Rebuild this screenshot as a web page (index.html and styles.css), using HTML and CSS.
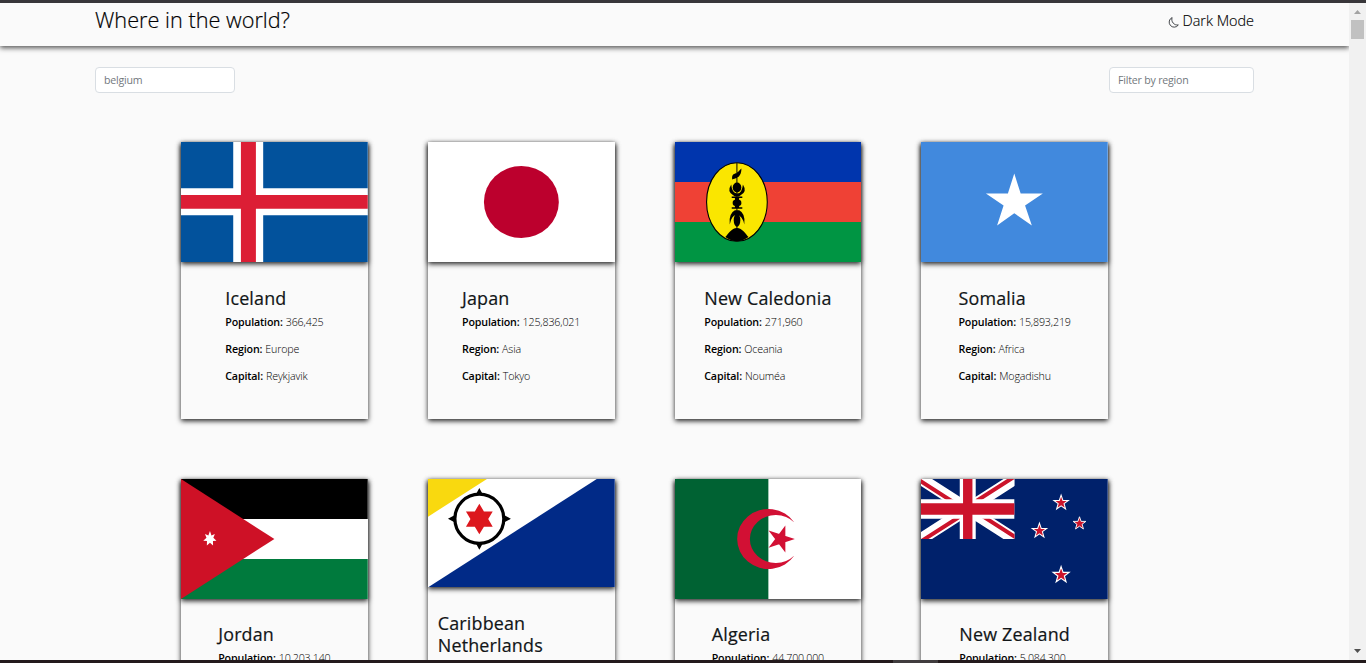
FILE: index.html
```html
<!DOCTYPE html>
<html lang="en">
<head>
<meta charset="utf-8">
<title>Where in the world?</title>
<link rel="stylesheet" href="styles.css">
</head>
<body>
<div class="edge-top"></div>
<div class="window">
  <div class="page">
    <header class="header">
      <h1 class="brand">Where in the world?</h1>
      <div class="mode">
        <svg class="moon" viewBox="0 0 16 16"><path d="M6 .8A7.3 7.3 0 1 0 15 11.6 8.2 8.2 0 0 1 6 .8Z" fill="none" stroke="#212529" stroke-width="1.2" stroke-linejoin="round"/></svg>
        <span>Dark Mode</span>
      </div>
    </header>
    <div class="filters">
      <input class="field search" type="text" placeholder="belgium">
      <input class="field region" type="text" placeholder="Filter by region">
    </div>
    <main class="grid">
      <article class="card">
        <svg class="flag" viewBox="0 0 187 120" preserveAspectRatio="none"><path fill="#02529c" d="M0 0h187v120H0z"/><path fill="#fff" d="M52.3 0h30v120h-30zM0 46.3h187v27H0z"/><path fill="#dc1e35" d="M60 0h15v120H60zM0 53h187v13.7H0z"/></svg>
        <div class="info"><div><h2>Iceland</h2><p><b>Population:</b> 366,425</p><p><b>Region:</b> Europe</p><p><b>Capital:</b> Reykjavik</p></div></div>
      </article>
      <article class="card">
        <svg class="flag" viewBox="0 0 187 120" preserveAspectRatio="none"><path fill="#fff" d="M0 0h187v120H0z"/><ellipse cx="93.5" cy="60" rx="37.5" ry="36" fill="#bc002d"/></svg>
        <div class="info"><div><h2>Japan</h2><p><b>Population:</b> 125,836,021</p><p><b>Region:</b> Asia</p><p><b>Capital:</b> Tokyo</p></div></div>
      </article>
      <article class="card">
        <svg class="flag" viewBox="0 0 187 120" preserveAspectRatio="none"><path fill="#0035ad" d="M0 0h187v40H0z"/><path fill="#ef4135" d="M0 40h187v40H0z"/><path fill="#009543" d="M0 80h187v40H0z"/><ellipse cx="62" cy="60" rx="30.4" ry="39.3" fill="#fae600" stroke="#000" stroke-width="1.1"/>
          <path d="M61.500 21h1v72h-1zM57.300 37.500C56.500 32 59.500 32 61.500 31S64 28.500 66.500 26.500C66.500 31.500 65 34 62.500 35.500S59 36.500 57.300 37.500Z"/>
          <ellipse cx="62.100" cy="45.500" rx="4.300" ry="5"/><path d="M56.300 42.500Q57 51 62 51.500T68 42.500Q72.500 49.500 66 53L64 54.500H60L58 53Q51.800 49.500 56.300 42.500Z"/>
          <path d="M56.800 54.500h10.600v1.500H56.800zM56.800 65.300h10.600v1.500H56.800zM60 56h4.200v10H60z"/><ellipse cx="62.100" cy="60.900" rx="4.400" ry="3.300"/>
          <path d="M54.800 82.500Q53.500 71.500 60 68.300H64.300Q70.800 71.500 69.400 82.500Q67.500 73.500 62.100 73T54.800 82.500Z"/><ellipse cx="62.100" cy="78.200" rx="3.300" ry="6.500"/>
          <path d="M50.300 95C53 92.500 56.500 86 62 86S71 92.500 73.700 95Q62 103.500 50.300 95Z"/></svg>
        <div class="info"><div><h2>New Caledonia</h2><p><b>Population:</b> 271,960</p><p><b>Region:</b> Oceania</p><p><b>Capital:</b> Nouméa</p></div></div>
      </article>
      <article class="card">
        <svg class="flag" viewBox="0 0 187 120" preserveAspectRatio="none"><path fill="#4189dd" d="M0 0h187v120H0z"/><path fill="#fff" d="M93.400 31.500 99.800 51.500H122L104.200 63.500 111 83.500 93.400 71.200 76.200 83.500 82.700 63.500 65 51.500H87z"/></svg>
        <div class="info"><div><h2>Somalia</h2><p><b>Population:</b> 15,893,219</p><p><b>Region:</b> Africa</p><p><b>Capital:</b> Mogadishu</p></div></div>
      </article>
      <article class="card">
        <svg class="flag" viewBox="0 0 187 120" preserveAspectRatio="none"><path d="M0 0h187v40H0z"/><path fill="#fff" d="M0 40h187v40H0z"/><path fill="#007a3d" d="M0 80h187v40H0z"/><path fill="#ce1126" d="M0 0 93.500 60 0 120z"/><path fill="#fff" d="M29 52l1.500 4.400 3.400-1.500-1.500 3.900 3.100 2.900-3.500.2.100 4.700-3.100-2.900-3.100 2.900.1-4.700-3.700-.2 3.200-2.900-1.500-3.900 3.400 1.500z"/></svg>
        <div class="info"><div><h2>Jordan</h2><p><b>Population:</b> 10,203,140</p></div></div>
      </article>
      <article class="card">
        <svg class="flag short" viewBox="0 0 187 108" preserveAspectRatio="none"><path fill="#fff" d="M0 0h187v108H0z"/><path fill="#f9d90f" d="M0 0h59L0 37.600z"/><path fill="#012a87" d="M0 108 169 0h18v108z"/><circle cx="51.400" cy="39.600" r="24.500" fill="none" stroke="#000" stroke-width="3.200"/><path d="M51.400 9l3.500 6.500h-7zM51.400 70.500l3.500-6.500h-7zM20 39.700l6.500-3.500v7zM83 39.700l-6.500-3.500v7z"/><path fill="#dc171d" d="M51.400 24.700 56 32.300h8.800L60.300 39.900l4.500 7.600H56L51.400 55l-4.500-7.500h-8.900l4.500-7.600-4.500-7.600h8.900z"/></svg>
        <div class="info"><div><h2>Caribbean Netherlands</h2></div></div>
      </article>
      <article class="card">
        <svg class="flag" viewBox="0 0 187 120" preserveAspectRatio="none"><path fill="#fff" d="M0 0h187v120H0z"/><path fill="#006233" d="M0 0h93.500v120H0z"/><path fill="#d21034" d="M119.500 43.500A31.200 30 0 1 0 119.500 76.500A25.800 24 0 1 1 119.500 43.500ZM120 60 93.700 68.700 110.500 46.500V73.500L93.700 51.500z"/></svg>
        <div class="info"><div><h2>Algeria</h2><p><b>Population:</b> 44,700,000</p></div></div>
      </article>
      <article class="card">
        <svg class="flag" viewBox="0 0 187 120" preserveAspectRatio="none">
          <defs><clipPath id="canton"><path d="M0 0h93.700v60H0z"/></clipPath>
          <path id="star" d="M0-8 1.900-2.500H7.600L3.100.9 4.700 6.500 0 3.200-4.700 6.500-3.100.9-7.600-2.500H-1.900z" fill="#cc142b" stroke="#fff" stroke-width="1.100"/></defs>
          <path fill="#00216b" d="M0 0h187v120H0z"/>
          <g clip-path="url(#canton)"><path d="M0 0 93.700 60M93.700 0 0 60" stroke="#fff" stroke-width="12"/><path d="M-1.100 1.700 45.800 31.700M94.800 58.300 47.900 28.300M92.600-1.700 45.700 28.300M1.100 61.700 48 31.700" stroke="#cc142b" stroke-width="4"/><path fill="#fff" d="M38.800 0h16v60h-16zM0 20.200h93.700v19.600H0z"/><path fill="#cc142b" d="M42.100 0h9.400v60h-9.400zM0 24.300h93.700v11.400H0z"/></g>
          <use href="#star" transform="translate(140.300 23.800) scale(.95)"/><use href="#star" transform="translate(158.700 44.500) scale(.84)"/><use href="#star" transform="translate(118.600 51.800) scale(.95)"/><use href="#star" transform="translate(140.300 96) scale(1.050)"/></svg>
        <div class="info"><div><h2>New Zealand</h2><p><b>Population:</b> 5,084,300</p></div></div>
      </article>
    </main>
  </div>
  <div class="scrollbar">
    <svg viewBox="0 0 17 17"><path d="M5 11 8.500 7 12 11z" fill="#a3a3a3"/></svg>
    <div class="thumb"></div>
    <svg viewBox="0 0 17 17"><path d="M5 6 8.500 10 12 6z" fill="#505050"/></svg>
  </div>
</div>
<div class="edge-bottom"><div></div></div>
</body>
</html>
```
FILE: styles.css
```css
* { box-sizing: border-box; }
body {
  margin: 0;
  height: 663px;
  overflow: hidden;
  display: flex;
  flex-direction: column;
  background: #fafafa;
  color: #111517;
  font-family: "Open Sans", "Noto Sans", sans-serif;
}
.edge-top { height: 3px; flex: none; background: #38363a; }
.edge-bottom { height: 3px; flex: none; background: #231a1c; padding-left: 893px; }
.edge-bottom div { width: 45px; height: 3px; background: #403c3e; }
.window { height: 657px; display: flex; overflow: hidden; }
.page { width: 1349px; overflow: hidden; }
.header {
  height: 43px;
  padding: 0 95px;
  display: flex;
  justify-content: space-between;
  align-items: flex-start;
  box-shadow: 0 2px 5px #555;
}
.brand { margin: 0; padding-top: 3px; font-size: 21.7px; line-height: 28px; font-weight: 300; color: #000; -webkit-text-stroke: 0.2px #000; }
.mode { display: flex; align-items: center; gap: 4px; padding-top: 8px; font-size: 14.4px; line-height: 20px; font-weight: 300; color: #000; -webkit-text-stroke: 0.15px #000; }
.moon { width: 11px; height: 11px; margin-top: 2px; }
.filters { display: flex; justify-content: space-between; padding: 21px 95px 0; }
.field {
  height: 26px;
  padding: 0 8px;
  border: 1px solid #d9dee3;
  border-radius: 4px;
  background: #fff;
  font: 400 10.6px "Open Sans", "Noto Sans", sans-serif;
  letter-spacing: -0.2px;
  outline: 0;
}
.field::placeholder { color: #72787d; opacity: 1; }
.search { width: 140px; }
.region { width: 145px; }
.grid {
  width: 927px;
  margin: 49px 0 0 181px;
  display: grid;
  grid-template-columns: repeat(4, 1fr);
  grid-auto-rows: 276.6px;
  gap: 60px;
}
.card { box-shadow: 0 2px 5px #222; }
.flag { display: block; width: 100%; height: 120px; box-shadow: 0 2px 5px #222; }
.flag.short { height: 108.4px; }
.info { display: flex; justify-content: center; padding: 24.8px 10px 0; }
.info h2 { margin: 0 0 5px; font-size: 17.9px; line-height: 22px; font-weight: 500; letter-spacing: 0.18px; -webkit-text-stroke: 0.2px #111517; }
.info p { margin: 0 0 11px; font-size: 10.7px; line-height: 16px; font-weight: 300; letter-spacing: -0.16px; white-space: nowrap; color: #000; }
.info b { font-weight: 600; letter-spacing: -0.15px; margin-right: 0.4px; }
.scrollbar { width: 17px; height: 657px; background: #f1f1f1; display: flex; flex-direction: column; }
.scrollbar svg { width: 17px; height: 17px; flex: none; }
.scrollbar .thumb { width: 13px; height: 19px; margin: 0 2px auto; background: #c1c1c1; }
```
